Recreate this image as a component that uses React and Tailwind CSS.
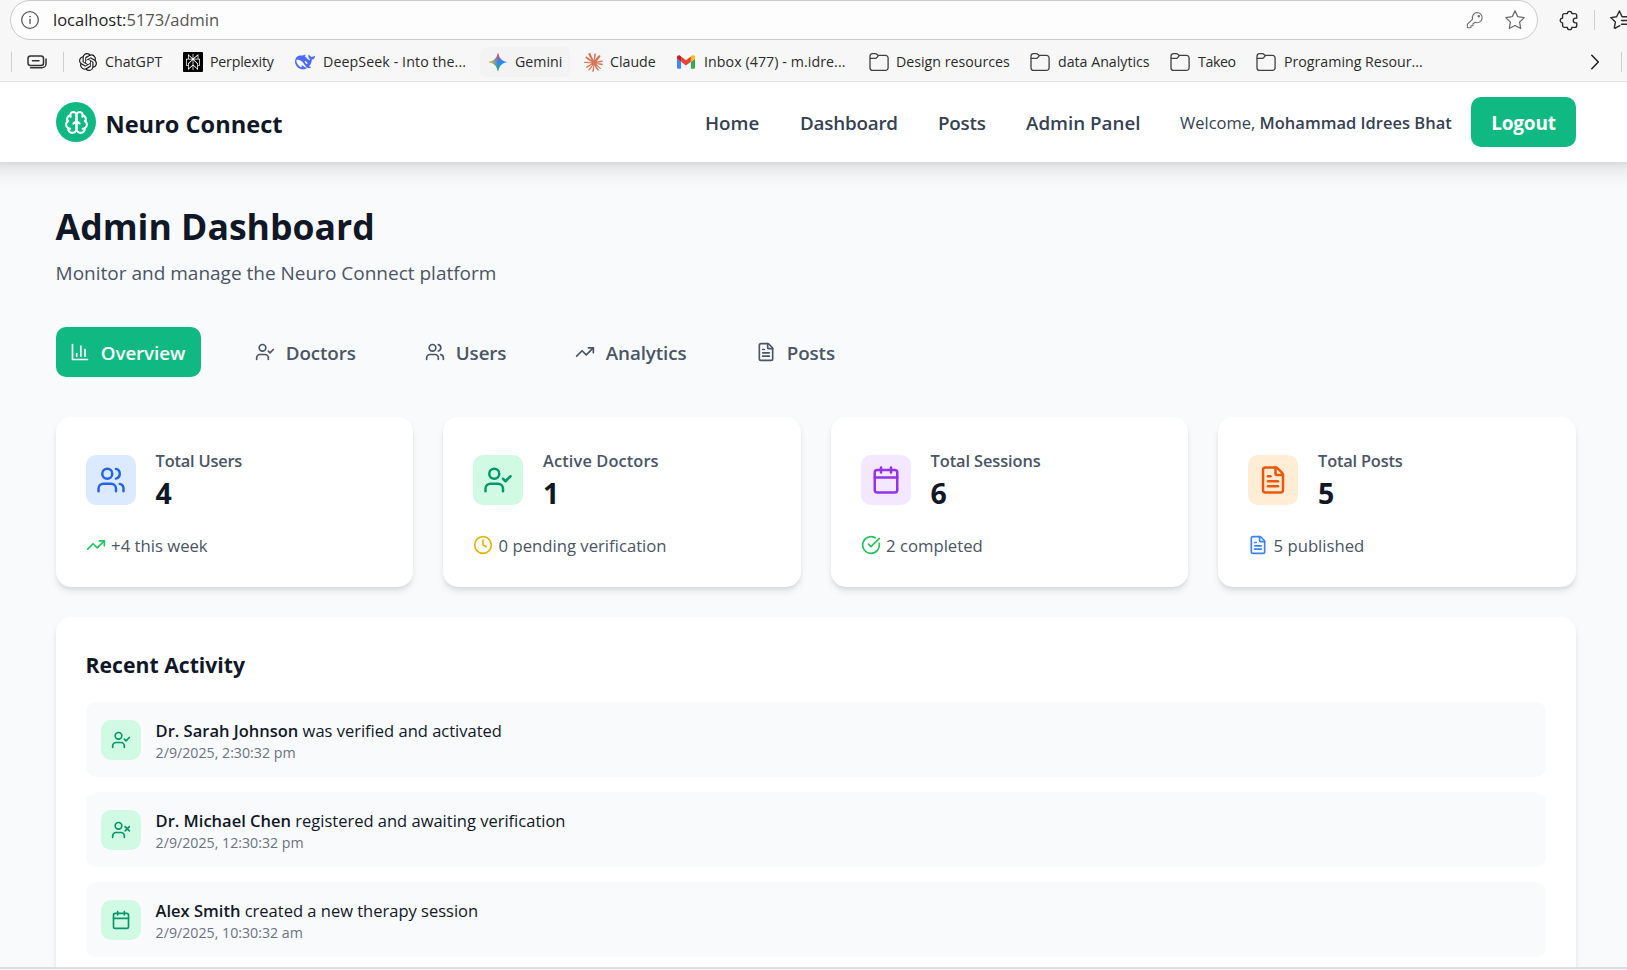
import React from "react";
import { Calendar, CircleCheckBig, Clock, FileText, TrendingUp, UserCheck, Users, UserX } from "lucide-react";
import { SiClaude, SiOpenai, SiPerplexity } from "react-icons/si";

const stroke = { fill: "none", stroke: "currentColor", strokeLinecap: "round", strokeLinejoin: "round" };

function InfoIcon() {
  return (
    <svg viewBox="0 0 20 20" className="h-5 w-5 text-[#5a5a5a]" {...stroke} strokeWidth="1.3">
      <circle cx="10" cy="10" r="8.3" />
      <path d="M10 9.2v4.3" />
      <circle cx="10" cy="6.6" r="0.5" fill="currentColor" strokeWidth="0.7" />
    </svg>
  );
}

function KeyIcon() {
  return (
    <svg viewBox="0 0 20 20" className="h-5 w-5 text-[#6b6b6b]" {...stroke} strokeWidth="1.1">
      <path d="M12.4 2.5a5.1 5.1 0 0 0-4.8 6.7L2.6 14.2a.9.9 0 0 0-.3.7v2c0 .5.4.8.8.8h2.1c.4 0 .8-.4.8-.8v-1.2h1.2c.5 0 .8-.4.8-.8v-1.1l2.1-1.5a5.1 5.1 0 1 0 2.3-9.8z" />
      <circle cx="13.8" cy="6.2" r="0.7" />
    </svg>
  );
}

function StarIcon() {
  return (
    <svg viewBox="0 0 22 22" className="h-[22px] w-[22px] text-[#6b6b6b]" {...stroke} strokeWidth="1.3">
      <path d="M11 1.8l2.8 5.9 6.4.9-4.6 4.5 1.1 6.4-5.7-3-5.7 3 1.1-6.4L1.8 8.6l6.4-.9z" />
    </svg>
  );
}

function PuzzleIcon() {
  return (
    <svg viewBox="0 0 20 20" className="h-[21px] w-[21px] text-[#2b2b2b]" {...stroke} strokeWidth="1.3">
      <path d="M8 3.4a2.1 2.1 0 0 1 4.2 0h2.9a1.8 1.8 0 0 1 1.8 1.8v2.6h-1.1a2.2 2.2 0 0 0 0 4.4h1.1v2.6a1.8 1.8 0 0 1-1.8 1.8h-2.9a2.1 2.1 0 0 1-4.2 0H5.2a1.8 1.8 0 0 1-1.8-1.8v-2.6a2.2 2.2 0 0 1 0-4.4V5.2A1.8 1.8 0 0 1 5.2 3.4z" />
    </svg>
  );
}

function FavoritesIcon() {
  return (
    <svg viewBox="0 0 22 22" className="h-[22px] w-[22px] shrink-0 text-[#2b2b2b]" {...stroke} strokeWidth="1.4">
      <path d="M6.3 19.2l-1-.3 1.1-5.8L1.8 8.6l5.8-.9L10.4 2l2.7 5.700h7" />
      <path d="M12.5 11.5h8M12.5 15.2h8M6.3 19.2l4.5-2.5" />
    </svg>
  );
}

function WorkspaceIcon() {
  return (
    <svg viewBox="0 0 20 16" className="h-4 w-5 text-[#333]" {...stroke} strokeWidth="1.5">
      <rect x="1" y="2" width="15.5" height="9.5" rx="2.5" />
      <path d="M5.500 6.800h6.500" />
      <path d="M3.500 13.700h11.500a4 4 0 0 0 4-4V5" />
    </svg>
  );
}

function FolderIcon() {
  return (
    <svg viewBox="0 0 20 20" className="h-5 w-5 text-[#404040]" {...stroke} strokeWidth="1.3">
      <path d="M1 4.200A2.700 2.700 0 0 1 3.700 1.600h2.600c.6 0 1.100.2 1.500.6l1.400 1.200h7.300A2.600 2.600 0 0 1 19.100 6v9.700a2.600 2.600 0 0 1-2.600 2.700H3.700A2.700 2.700 0 0 1 1 15.700z" />
      <path d="M1.200 6.300h5.300c.5 0 .9-.2 1.200-.6l1.700-2.100" />
    </svg>
  );
}

function DeepSeekIcon() {
  return (
    <svg viewBox="0 0 24 24" className="h-5 w-5" fill="#4d6bfe" fillRule="evenodd">
      <path d="M23.748 4.482c-.254-.124-.364.113-.512.234-.051.039-.094.09-.137.136-.372.397-.806.657-1.373.626-.829-.046-1.537.214-2.163.848-.133-.782-.575-1.248-1.247-1.548-.352-.156-.708-.311-.955-.65-.172-.241-.219-.51-.305-.774-.055-.16-.11-.323-.293-.35-.2-.031-.278.136-.356.276-.313.572-.434 1.202-.422 1.84.027 1.436.633 2.58 1.838 3.393.137.093.172.187.129.323-.082.28-.18.552-.266.833-.055.179-.137.217-.329.14a5.526 5.526 0 01-1.736-1.18c-.857-.828-1.631-1.742-2.597-2.458a11.365 11.365 0 00-.689-.471c-.985-.957.13-1.743.388-1.836.27-.098.093-.432-.779-.428-.872.004-1.67.295-2.687.684a3.055 3.055 0 01-.465.137 9.597 9.597 0 00-2.883-.102c-1.885.21-3.39 1.102-4.497 2.623C.082 8.606-.231 10.684.152 12.85c.403 2.284 1.569 4.175 3.36 5.653 1.858 1.533 3.997 2.284 6.438 2.14 1.482-.085 3.133-.284 4.994-1.86.47.234.962.327 1.78.397.63.059 1.236-.03 1.705-.128.735-.156.684-.837.419-.961-2.155-1.004-1.682-.595-2.113-.926 1.096-1.296 2.746-2.642 3.392-7.003.05-.347.007-.565 0-.845-.004-.17.035-.237.23-.256a4.173 4.173 0 001.545-.475c1.396-.763 1.96-2.015 2.093-3.517.02-.23-.004-.467-.247-.588zM11.581 18c-2.089-1.642-3.102-2.183-3.52-2.16-.392.024-.321.471-.235.763.09.288.207.486.371.739.114.167.192.416-.113.603-.673.416-1.842-.14-1.897-.167-1.361-.802-2.5-1.86-3.301-3.307-.774-1.393-1.224-2.887-1.298-4.482-.02-.386.093-.522.477-.592a4.696 4.696 0 011.529-.039c2.132.312 3.946 1.265 5.468 2.774.868.86 1.525 1.887 2.202 2.891.72 1.066 1.494 2.082 2.48 2.914.348.292.625.514.891.677-.802.09-2.14.11-3.054-.614zM11.700 11.300a.6.6 0 0 1 .8-.6c1.600.6 2.700 2.100 2.300 3.600-.7.4-1.600-.1-2-.9-.3-.7-1-1.200-1.100-2.100z" />
    </svg>
  );
}

function GeminiIcon() {
  const star = "M12 0.500C12.900 7 17 11.100 23.500 12 17 12.900 12.900 17 12 23.500 11.100 17 7 12.900 .5 12 7 11.100 11.100 7 12 .5z";
  return (
    <svg viewBox="0 0 24 24" className="h-5 w-5">
      <defs>
        <linearGradient id="gem-top" x1="12" y1="0" x2="12" y2="11" gradientUnits="userSpaceOnUse">
          <stop offset="0.3" stopColor="#f0434c" />
          <stop offset="1" stopColor="#f0434c" stopOpacity="0" />
        </linearGradient>
        <linearGradient id="gem-left" x1="0" y1="12" x2="12" y2="12" gradientUnits="userSpaceOnUse">
          <stop offset="0.2" stopColor="#fabc12" />
          <stop offset="1" stopColor="#fabc12" stopOpacity="0" />
        </linearGradient>
        <linearGradient id="gem-bottom" x1="11" y1="24" x2="13" y2="12" gradientUnits="userSpaceOnUse">
          <stop offset="0.2" stopColor="#17b25a" />
          <stop offset="1" stopColor="#17b25a" stopOpacity="0" />
        </linearGradient>
      </defs>
      <path d={star} fill="#3186ff" />
      <path d={star} fill="url(#gem-bottom)" />
      <path d={star} fill="url(#gem-top)" />
      <path d={star} fill="url(#gem-left)" />
    </svg>
  );
}

function GmailIcon() {
  return (
    <svg viewBox="52 42 88 66" className="h-[14px] w-[18px]">
      <path fill="#4285f4" d="M58 108h14V74L52 59v43c0 3.320 2.690 6 6 6" />
      <path fill="#34a853" d="M120 108h14c3.320 0 6-2.690 6-6V59l-20 15" />
      <path fill="#fbbc04" d="M120 48v26l20-15v-8c0-7.420-8.470-11.650-14.400-7.200" />
      <path fill="#ea4335" d="M72 74V48l24 18 24-18v26L96 92" />
      <path fill="#c5221f" d="M52 51v8l20 15V48l-5.600-4.200c-5.940-4.450-14.400-.22-14.400 7.200" />
    </svg>
  );
}

function BrainIcon() {
  return (
    <svg viewBox="0 0 24 24" className="h-[25px] w-[25px] text-white" {...stroke} strokeWidth="2">
      <path d="M12 5a3 3 0 1 0-5.997.125 4 4 0 0 0-2.526 5.770 4 4 0 0 0 .556 6.588A4 4 0 1 0 12 18Z" />
      <path d="M12 5a3 3 0 1 1 5.997.125 4 4 0 0 1 2.526 5.770 4 4 0 0 1-.556 6.588A4 4 0 1 1 12 18Z" />
      <path d="M15 13a4.500 4.500 0 0 1-3-4 4.500 4.500 0 0 1-3 4" />
      <path d="M17.599 6.500a3 3 0 0 0 .399-1.375M6.003 5.125A3 3 0 0 0 6.401 6.500M3.477 10.896a4 4 0 0 1 .585-.396M19.938 10.500a4 4 0 0 1 .585.396M6 18a4 4 0 0 1-1.967-.516M19.967 17.484A4 4 0 0 1 18 18" />
    </svg>
  );
}

function BarsIcon({ className }) {
  return (
    <svg viewBox="0 0 24 24" className={className} {...stroke} strokeWidth="2">
      <path d="M3 3v18h18M18 17V9M13 17V5M8 17v-3" />
    </svg>
  );
}

const bookmarks = [
  { label: "ChatGPT", width: "w-[105px]", gap: "gap-[7px]", track: "", icon: <SiOpenai className="h-[18px] w-[18px] text-[#1c1c1c]" /> },
  {
    label: "Perplexity", width: "w-[112px]", gap: "gap-[7px]", track: "tracking-[-0.2px]",
    icon: <span className="flex h-5 w-5 items-center justify-center rounded-[1px] bg-black"><SiPerplexity className="h-[16px] w-[16px] text-white" /></span>,
  },
  { label: "DeepSeek - Into the...", width: "w-[193px]", gap: "gap-2", track: "tracking-[0.1px]", icon: <DeepSeekIcon /> },
  { label: "Gemini", width: "w-[95px]", gap: "gap-[7px]", track: "", hover: true, icon: <GeminiIcon /> },
  { label: "Claude", width: "w-[93px]", gap: "gap-[7px]", track: "", icon: <SiClaude className="h-[19px] w-[19px] text-[#d97757]" /> },
  { label: "Inbox (477) - m.idre...", width: "w-[193px]", gap: "gap-2", track: "tracking-[0.08px]", icon: <GmailIcon /> },
  { label: "Design resources", width: "w-[161px]", gap: "gap-[7px]", track: "", icon: <FolderIcon /> },
  { label: "data Analytics", width: "w-[140px]", gap: "gap-2", track: "", icon: <FolderIcon /> },
  { label: "Takeo", width: "w-[86px]", gap: "gap-2", track: "tracking-[-0.4px]", icon: <FolderIcon /> },
  { label: "Programing Resour...", width: "w-[335px]", gap: "gap-2", track: "", icon: <FolderIcon /> },
];

function BrowserBar() {
  return (
    <div className="h-[82px] shrink-0 border-b border-[#e5e5e5] bg-[#f7f7f7]">
      <div className="flex h-10 items-center pl-[10px]">
        <div className="flex h-10 w-[1528px] shrink-0 items-center rounded-full border border-[#cbcbcb] bg-[#fdfdfd] pl-[9px] pr-[11px]">
          <InfoIcon />
          <span className="ml-[13px] flex-1 text-[16.5px] leading-5 text-[#555]">
            <span className="text-[#1f1f1f]">localhost:</span>5173/admin
          </span>
          <KeyIcon />
          <span className="ml-[19px]"><StarIcon /></span>
        </div>
        <span className="ml-[21px]"><PuzzleIcon /></span>
        <span className="ml-[14px] h-5 w-px shrink-0 bg-[#cfcfcf]" />
        <span className="ml-[14px] w-[18px] overflow-hidden"><FavoritesIcon /></span>
      </div>
      <div className="flex h-[41px] items-center overflow-hidden pl-[11px] pt-[3px]">
        <span className="h-5 w-px shrink-0 bg-[#cfcfcf]" />
        <span className="ml-[15px]"><WorkspaceIcon /></span>
        <span className="ml-4 mr-[14px] h-5 w-px shrink-0 bg-[#cfcfcf]" />
        {bookmarks.map((b) => (
          <div key={b.label} className={`flex shrink-0 items-center ${b.width}`}>
            <div className={`flex h-[30px] items-center ${b.gap} ${b.hover ? "-ml-2 rounded-md bg-[#f3f3f3] pl-2 pr-2" : ""}`}>
              <span className="flex h-5 w-5 shrink-0 items-center justify-center">{b.icon}</span>
              <span className={`whitespace-nowrap text-[14.2px] leading-5 text-[#2b2b2b] ${b.track}`}>{b.label}</span>
            </div>
          </div>
        ))}
        <svg viewBox="0 0 8 16" className="h-4 w-2 shrink-0 text-[#1f1f1f]" {...stroke} strokeWidth="1.5">
          <path d="M.8 1.200 7.300 8 .8 14.800" />
        </svg>
        <span className="ml-[22px] h-5 w-px shrink-0 bg-[#cfcfcf]" />
      </div>
    </div>
  );
}

function Navbar() {
  return (
    <header className="z-10 -mx-5 flex h-20 shrink-0 items-center justify-between bg-white pl-[76px] pr-[71px] shadow-[0_12.5px_18.75px_-3.75px_rgba(0,0,0,0.1),0_5px_7.5px_-5px_rgba(0,0,0,0.1)]">
      <div className="flex items-center gap-[9.5px]">
        <span className="flex h-10 w-10 items-center justify-center rounded-full bg-[#10b981]"><BrainIcon /></span>
        <span className="pt-[3px] text-[23.6px] font-bold leading-9 text-gray-900">Neuro Connect</span>
      </div>
      <nav className="flex items-center whitespace-nowrap text-[18.8px] font-semibold text-gray-700">
        <a className="w-[95px] pt-[2px]">Home</a>
        <a className="w-[138px] pt-[2px] tracking-[-0.2px]">Dashboard</a>
        <a className="w-[88px] pt-[2px] tracking-[-0.2px]">Posts</a>
        <a className="w-[154px] pt-[2px]">Admin Panel</a>
        <span className="w-[291px] pt-[3px] text-[16.5px] font-normal">
          Welcome, <b className="font-semibold">Mohammad Idrees Bhat</b>
        </span>
        <button className="h-[50px] w-[105px] rounded-[10px] bg-[#10b981] pt-[2px] text-[19px] font-bold tracking-[-0.2px] text-white">Logout</button>
      </nav>
    </header>
  );
}

const tabs = [
  { label: "Overview", icon: BarsIcon, text: "w-[85px]", active: true },
  { label: "Doctors", icon: UserCheck, text: "w-[70px]" },
  { label: "Users", icon: Users, text: "w-[50px]" },
  { label: "Analytics", icon: TrendingUp, text: "w-[81px]" },
  { label: "Posts", icon: FileText, text: "w-[48px]" },
];

const stats = [
  { label: "Total Users", value: "4", icon: Users, tile: "bg-[#dbeafe] text-[#2563eb]", note: "+4 this week", noteIcon: TrendingUp, noteColor: "text-[#22c55e]", track: "tracking-[-0.2px]" },
  { label: "Active Doctors", value: "1", icon: UserCheck, tile: "bg-[#d1fae5] text-[#059669]", note: "0 pending verification", noteIcon: Clock, noteColor: "text-[#eab308]", track: "tracking-[0.1px]" },
  { label: "Total Sessions", value: "6", icon: Calendar, tile: "bg-[#f3e8ff] text-[#9333ea]", note: "2 completed", noteIcon: CircleCheckBig, noteColor: "text-[#22c55e]", track: "tracking-[-0.1px]" },
  { label: "Total Posts", value: "5", icon: FileText, tile: "bg-[#ffedd5] text-[#ea580c]", note: "5 published", noteIcon: FileText, noteColor: "text-[#3b82f6]", track: "tracking-[-0.2px]" },
];

const activity = [
  { who: "Dr. Sarah Johnson", what: "was verified and activated", time: "2/9/2025, 2:30:32 pm", icon: UserCheck },
  { who: "Dr. Michael Chen", what: "registered and awaiting verification", time: "2/9/2025, 12:30:32 pm", icon: UserX },
  { who: "Alex Smith", what: "created a new therapy session", time: "2/9/2025, 10:30:32 am", icon: Calendar },
];

function StatCard({ label, value, icon: Icon, tile, note, noteIcon: NoteIcon, noteColor, track }) {
  return (
    <div className="h-[170px] rounded-[15px] bg-white p-[30px] shadow-[0_5px_7.5px_-1.25px_rgba(0,0,0,0.1),0_2.5px_5px_-2.5px_rgba(0,0,0,0.1)]">
      <div className="flex h-[65px] items-center gap-5">
        <span className={`flex h-[50px] w-[50px] items-center justify-center rounded-[10px] ${tile}`}>
          <Icon className="h-[30px] w-[30px]" />
        </span>
        <div className="pt-[2px]">
          <p className={`text-[16.4px] font-semibold leading-[25px] text-gray-600 ${track}`}>{label}</p>
          <p className="text-[28.5px] font-bold leading-[40px] text-gray-900">{value}</p>
        </div>
      </div>
      <div className="mt-[19px] flex items-center gap-[5.5px]">
        <NoteIcon className={`h-5 w-5 ${noteColor}`} />
        <span className="pt-[2px] text-[16.7px] leading-[25px] text-gray-600">{note}</span>
      </div>
    </div>
  );
}

export default function App() {
  return (
    <div className="flex h-[970px] w-[1627px] flex-col overflow-hidden bg-[#f9fafb] font-['Open_Sans','Noto_Sans',sans-serif]">
      <BrowserBar />
      <Navbar />
      <main className="flex min-h-0 flex-1 flex-col overflow-hidden pl-[55.6px] pr-[51.4px] pt-[39px]">
        <h1 className="text-[35.6px] font-bold leading-[50px] text-gray-900">Admin Dashboard</h1>
        <p className="mt-[7px] text-[19px] leading-[30px] text-gray-600">Monitor and manage the Neuro Connect platform</p>
        <div className="mt-[39px] flex shrink-0 gap-10">
          {tabs.map(({ label, icon: Icon, text, active }) => (
            <button key={label} className={`flex h-[50px] items-center gap-[10.4px] whitespace-nowrap rounded-[10px] px-[14.8px] text-[18.8px] font-semibold ${active ? "bg-[#10b981] text-white" : "text-gray-600"}`}>
              <Icon className="h-5 w-5" />
              <span className={`pt-[2px] text-left tracking-[-0.1px] ${text}`}>{label}</span>
            </button>
          ))}
        </div>
        <div className="mt-10 grid shrink-0 grid-cols-4 gap-[30px]">
          {stats.map((s) => <StatCard key={s.label} {...s} />)}
        </div>
        <section className="mt-[30px] h-[400px] shrink-0 rounded-[15px] bg-white p-[30px] shadow-[0_5px_7.5px_-1.25px_rgba(0,0,0,0.1),0_2.5px_5px_-2.5px_rgba(0,0,0,0.1)]">
          <h2 className="text-[21.2px] font-bold leading-[35px] text-gray-900">Recent Activity</h2>
          <div className="mt-5 flex flex-col gap-[15px]">
            {activity.map(({ who, what, time, icon: Icon }) => (
              <div key={who} className="flex h-[75px] items-center gap-[15px] rounded-[10px] bg-[#f9fafb] px-[15px]">
                <span className="flex h-10 w-10 items-center justify-center rounded-[10px] bg-[#d1fae5] text-[#059669]">
                  <Icon className="h-5 w-5" />
                </span>
                <div className="pt-[2px]">
                  <p className="text-[16.5px] leading-[25px] text-gray-900"><b className="font-semibold">{who}</b> {what}</p>
                  <p className="text-[14.2px] leading-5 text-gray-500">{time}</p>
                </div>
              </div>
            ))}
          </div>
        </section>
      </main>
      <div className="z-10 h-[3px] shrink-0 border-t-2 border-[#dedede] bg-[#f5f5f5]" />
    </div>
  );
}
